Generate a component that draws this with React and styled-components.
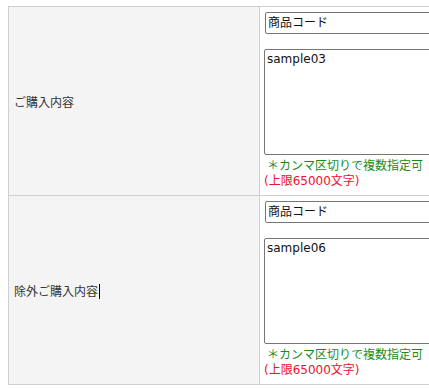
import React from 'react'
import styled, { createGlobalStyle } from 'styled-components'

const Global = createGlobalStyle`
  body {
    margin: 0;
    background: #fff;
    font-family: "DejaVu Sans", "Noto Sans CJK JP", sans-serif;
    font-size: 12px;
    color: #333;
  }
`

const rows = [
  { label: 'ご購入内容', value: 'sample03', caret: false },
  { label: '除外ご購入内容', value: 'sample06', caret: true },
]

const App = () => {
  return (
    <>
      <Global />
      <FormTable>
        <tbody>
          {rows.map((row) => (
            <tr key={row.label}>
              <Label>
                {row.label}
                {row.caret && <Caret />}
              </Label>
              <Field>
                <Select defaultValue="code">
                  <option value="code">商品コード</option>
                </Select>
                <TextArea defaultValue={row.value} />
                <Note>＊カンマ区切りで複数指定可</Note>
                <Limit>(上限65000文字)</Limit>
              </Field>
            </tr>
          ))}
        </tbody>
      </FormTable>
    </>
  )
}

const FormTable = styled.table`
  margin: 6px 0 0 8px;
  border-collapse: collapse;
  width: 560px;
  td {
    border: 1px solid #cfcfcf;
  }
`
const Label = styled.td`
  width: 240px;
  padding: 0 5px;
  background: #f3f4f3;
  vertical-align: middle;
  white-space: nowrap;
`
const Caret = styled.span`
  display: inline-block;
  width: 1px;
  height: 15px;
  margin-left: 1px;
  background: #000;
  vertical-align: -3px;
`
const Field = styled.td`
  padding: 5px 5px 6px 4px;
  vertical-align: top;
  background: #fff;
`
const Select = styled.select`
  display: block;
  width: 290px;
  height: 22px;
  margin: 0 0 15px 1px;
  padding: 0 2px;
  border: 1px solid #767676;
  border-radius: 2px;
  background: #fff;
  font-family: "DejaVu Sans", "Noto Sans CJK JP", sans-serif;
  font-size: 12px;
  color: #111;
  appearance: none;
`
const TextArea = styled.textarea`
  display: block;
  box-sizing: border-box;
  width: 290px;
  height: 106px;
  margin: 0 0 2px 0;
  padding: 2px 2px;
  border: 1px solid #767676;
  border-radius: 2px;
  resize: none;
  font-family: "DejaVu Sans", "Noto Sans CJK JP", sans-serif;
  font-size: 12px;
  color: #111;
`
const Note = styled.div`
  padding-left: 3px;
  line-height: 16px;
  color: #1b8a1b;
  font-family: "Noto Sans CJK JP", sans-serif;
`
const Limit = styled.div`
  line-height: 16px;
  color: #f01030;
  font-family: "DejaVu Sans", "Noto Sans CJK JP", sans-serif;
`

export default App
